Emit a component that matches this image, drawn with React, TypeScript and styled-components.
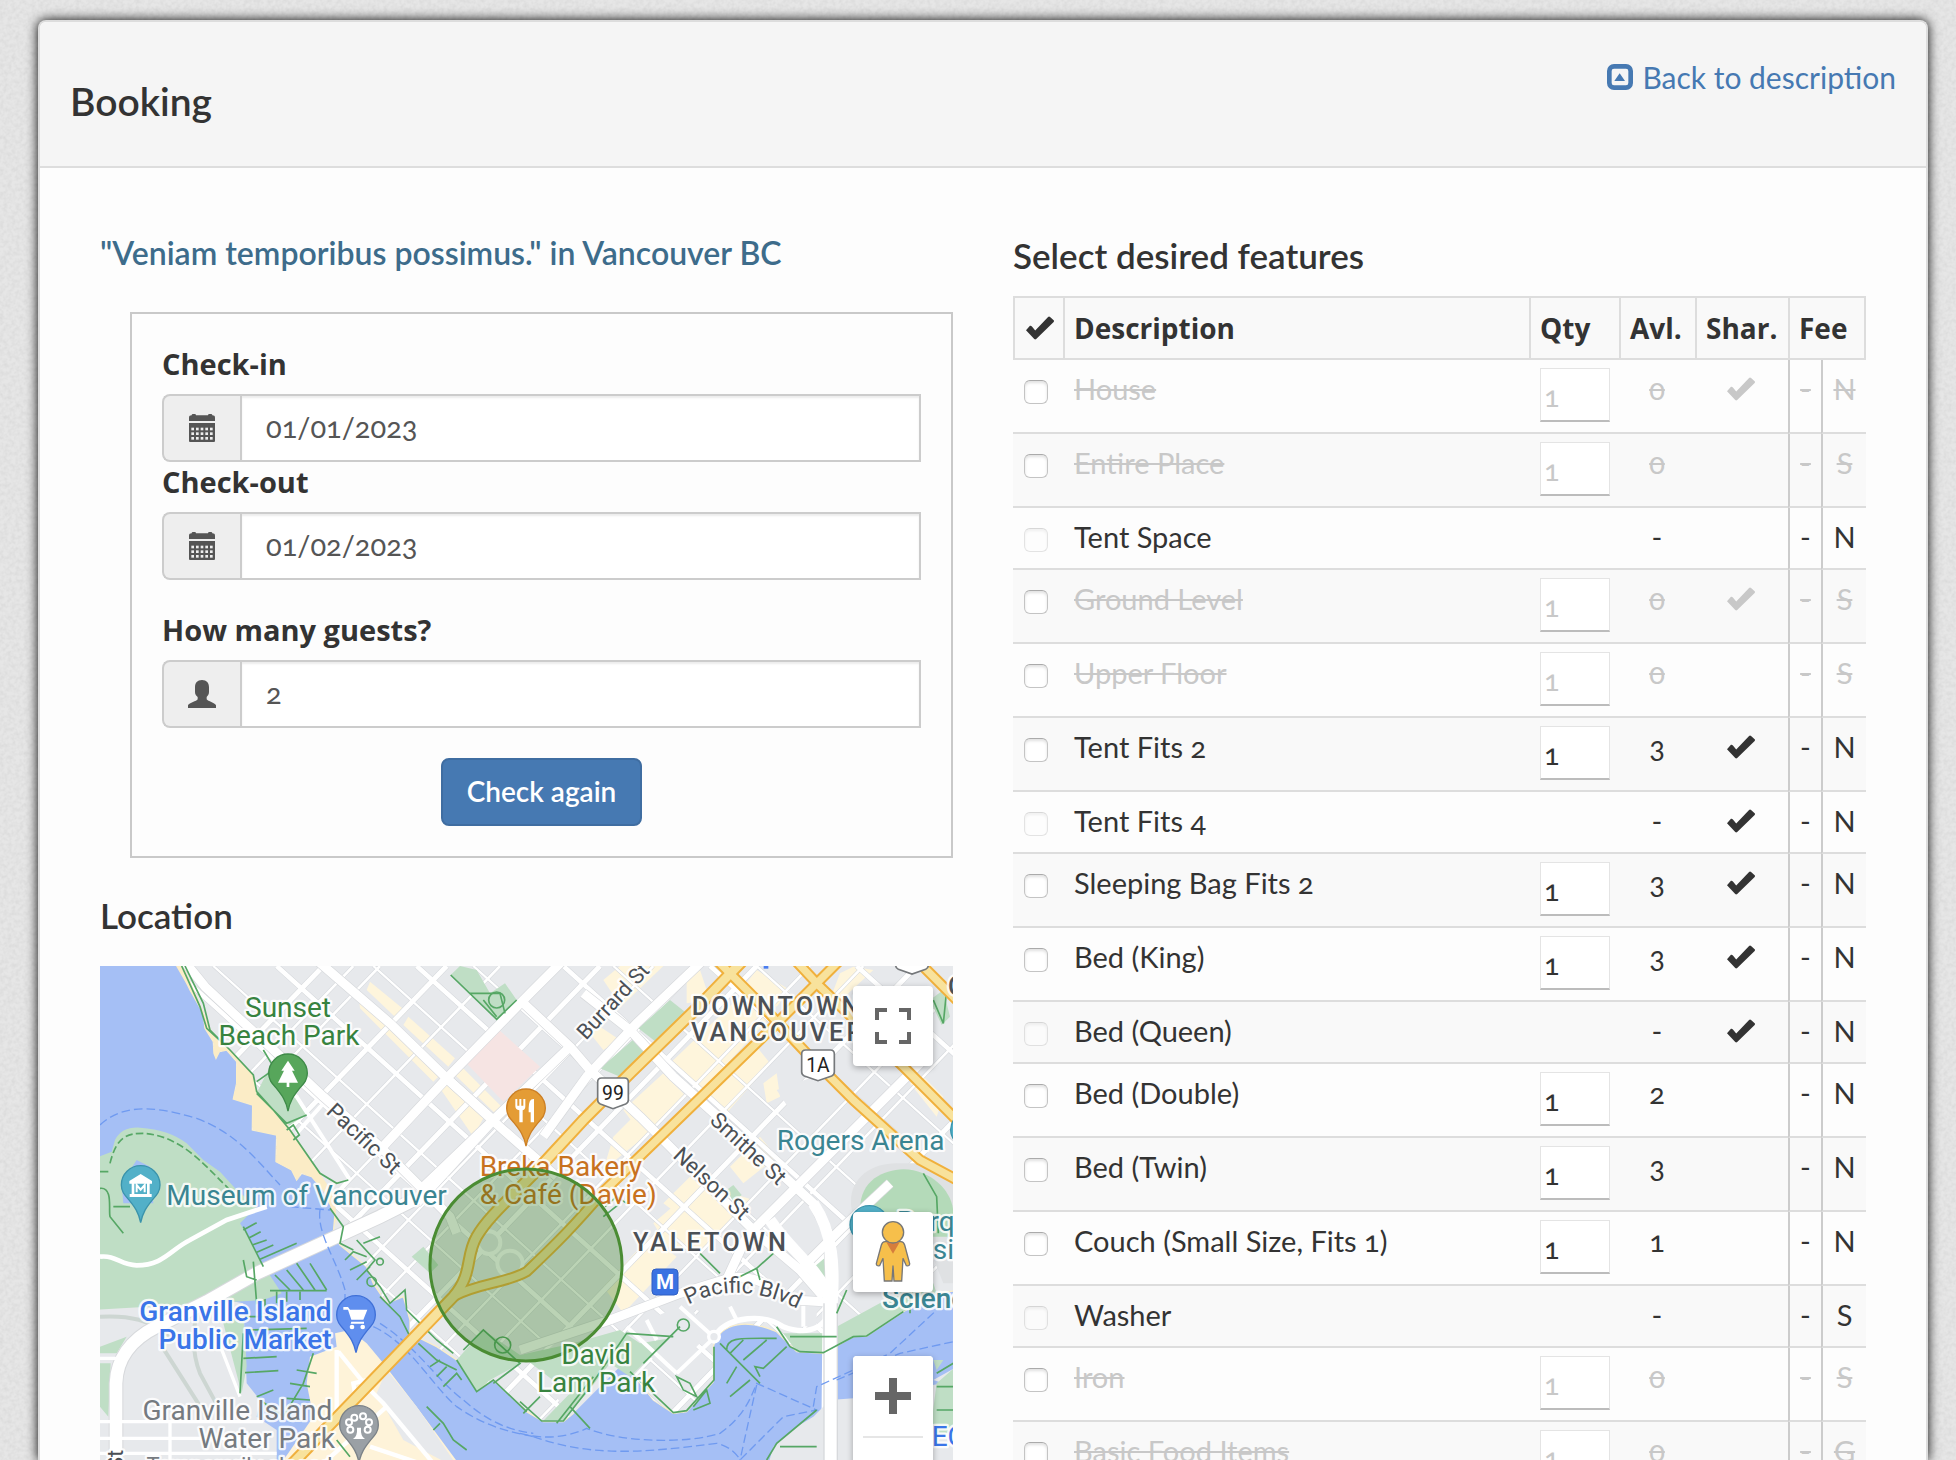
import React, { useId, useState } from "react";
import styled, { createGlobalStyle, css } from "styled-components";

const bodyFont = `Lato, "Open Sans", sans-serif`;
const boldFont = `"Open Sans", Lato, sans-serif`;

const GlobalStyle = createGlobalStyle`
  *, *::before, *::after { box-sizing: border-box; }
  body {
    margin: 0;
    overflow: hidden;
    background: #e6e6e6;
    color: #333;
    font: 29px/40px ${bodyFont};
    font-variant-numeric: oldstyle-nums;
  }
`;

/* ---------- page frame ---------- */

const Page = styled.div`
  height: 100vh;
  overflow: hidden;
  padding: 20px 28px 0 38px;
  position: relative;
`;

const Grain = styled.svg`
  position: absolute;
  inset: 0;
  width: 100%;
  height: 100%;
`;

const Panel = styled.main`
  position: relative;
  display: flex;
  flex-direction: column;
  height: 100%;
  border: 2px solid #ddd;
  border-bottom: 0;
  border-radius: 8px 8px 0 0;
  background: #fdfdfd;
  box-shadow: 0 0 12px #000;
`;

const PanelHeader = styled.header`
  display: flex;
  align-items: flex-start;
  justify-content: space-between;
  flex: none;
  height: 146px;
  padding: 35px 30px;
  border-bottom: 2px solid #ddd;
  border-radius: 6px 6px 0 0;
  background: #f5f5f5;
`;

const PageTitle = styled.h1`
  margin: 22px 0 0;
  font: 600 39px/44px ${bodyFont};
`;

const BackLink = styled.a`
  display: flex;
  align-items: center;
  gap: 9px;
  color: #4679b2;
  font-size: 30px;
  text-decoration: none;
`;

const Columns = styled.div`
  display: grid;
  grid-template-columns: 1fr 1fr;
  gap: 60px;
  flex: 1;
  min-height: 0;
  padding: 60px 60px 0;
`;

const Column = styled.section`
  display: flex;
  flex-direction: column;
  min-width: 0;
  min-height: 0;
`;

const Heading = styled.h2<{ $top: number; $bottom: number; $accent?: boolean }>`
  flex: none;
  margin: ${(p) => p.$top}px 0 ${(p) => p.$bottom}px;
  color: ${(p) => (p.$accent ? "#3d6c8b" : "#333")};
  font: 600 ${(p) => (p.$accent ? 32 : 35)}px/40px ${bodyFont};
`;

/* ---------- booking form ---------- */

const Form = styled.form`
  flex: none;
  margin-left: 30px;
  padding: 30px;
  border: 2px solid #c9c9c9;
`;

const Field = styled.div<{ $spaced?: boolean }>`
  margin-bottom: ${(p) => (p.$spaced ? 30 : 0)}px;
`;

const Label = styled.label`
  display: block;
  margin-bottom: 10px;
  font: 700 29px/40px ${boldFont};
`;

const InputGroup = styled.div`
  display: flex;
  height: 68px;
`;

const Addon = styled.span`
  display: flex;
  align-items: center;
  justify-content: center;
  width: 78px;
  border: 2px solid #ccc;
  border-right: 0;
  border-radius: 8px 0 0 8px;
  background: #eee;
`;

const TextInput = styled.input`
  flex: 1;
  min-width: 0;
  padding: 0 24px 2px;
  border: 2px solid #ccc;
  border-radius: 0;
  background: #fff;
  box-shadow: inset 0 2px 2px rgba(0, 0, 0, 0.075);
  color: #555;
  font: inherit;
  font-variant-numeric: inherit;
`;

const SubmitButton = styled.button`
  display: block;
  height: 68px;
  margin: 0 auto;
  padding: 0 24px 2px;
  border: 2px solid #3f6da1;
  border-radius: 8px;
  background: #4679b2;
  color: #fff;
  font: 600 28px/40px ${bodyFont};
`;

/* ---------- features table ---------- */

const Table = styled.table`
  flex: none;
  width: 100%;
  table-layout: fixed;
  border-collapse: separate;
  border-spacing: 0;
`;

const Col = styled.col<{ $w?: number }>`
  width: ${(p) => (p.$w ? `${p.$w}px` : "auto")};
`;

const HeadCell = styled.th`
  height: 64px;
  padding: 0 9px;
  border: 2px solid #ddd;
  border-right-width: 0;
  background: #f9f9f9;
  font-family: ${boldFont};
  font-size: 28px;
  text-align: left;
  white-space: nowrap;
  &:first-child { padding-left: 11px; }
  &:last-child { border-right-width: 2px; }
  svg { display: block; }
`;

const Cell = styled.td<{ $kind?: "center" | "fee" | "box" | "qty" }>`
  padding: 9px 11px 11px;
  border-bottom: 2px solid #ddd;
  vertical-align: top;
  white-space: nowrap;
  ${(p) => p.$kind === "center" && css`text-align: center;`}
  ${(p) => p.$kind === "fee" && css`
    padding: 9px 0 11px;
    border-left: 2px solid #ccc;
    text-align: center;
  `}
  ${(p) => p.$kind === "box" && css`padding: 20px 11px 0;`}
  ${(p) => p.$kind === "qty" && css`padding: 8px 11px 0;`}
  svg { display: inline-block; vertical-align: -1px; }
`;

const Row = styled.tr<{ $off?: boolean; $striped?: boolean }>`
  background: ${(p) => (p.$striped ? "#f9f9f9" : "transparent")};
  color: ${(p) => (p.$off ? "#c8c8c8" : "#333")};
  ${Cell} { text-decoration: ${(p) => (p.$off ? "line-through" : "none")}; }
  ${Cell}:nth-child(3) { text-decoration: none; }
`;

const CheckBox = styled.input`
  appearance: none;
  display: block;
  width: 24px;
  height: 24px;
  margin: 0;
  border: 1px solid #c4c4c4;
  border-top-color: #aaa;
  border-radius: 6px;
  background: #fff;
  box-shadow: inset 0 2px 3px rgba(0, 0, 0, 0.12);
  &:disabled { opacity: 0.45; }
  &:checked { background: #4679b2; }
`;

const QtyInput = styled.input<{ $off?: boolean }>`
  display: block;
  width: 70px;
  height: 54px;
  margin: 0 0 10px;
  padding: 2px 3px 0;
  border: 1px solid #e4e4e4;
  border-bottom: 2px solid #bcbcbc;
  border-radius: 0;
  background: #fff;
  color: ${(p) => (p.$off ? "#c8c8c8" : "#333")};
  font: inherit;
  font-variant-numeric: inherit;
`;

/* ---------- icons ---------- */

const CheckIcon = () => (
  <svg width="28" height="24" viewBox="0 0 85 71" fill="currentColor" aria-hidden="true">
    <path d="M0 42 12 29Q15 28 18 31L28 43 67 2Q70 -1 73 2L84 12Q86 14 84 17L31 69Q28 72 25 69Z" />
  </svg>
);

const CalendarIcon = () => (
  <svg width="26" height="28" viewBox="0 0 78 84" aria-hidden="true">
    <path fill="#555" d="M8 4Q8 0 12 0H17Q21 0 21 4H57Q57 0 61 0H66Q70 0 70 4 78 4 78 11V21H0V11Q0 4 8 4ZM0 27H78V81Q78 84 75 84H3Q0 84 0 81Z" />
    {[41, 55, 69].map((y) =>
      [7, 21, 35, 49, 63].map((x) => <rect key={`${x}-${y}`} x={x} y={y} width="8" height="8" fill="#eee" />)
    )}
  </svg>
);

const UserIcon = () => (
  <svg width="28" height="28" viewBox="0 0 84 84" aria-hidden="true">
    <path fill="#555" d="M42 0C56 0 63 9 63 22V36C63 44 59 47 56 51V58C60 64 80 68 84 76V84H0V76C4 68 26 64 29 58V51C25 47 21 44 21 36V22C21 9 28 0 42 0Z" />
  </svg>
);

const CollapseIcon = () => (
  <svg width="26" height="26" viewBox="0 0 78 78" aria-hidden="true">
    <rect x="7" y="7" width="64" height="64" rx="14" fill="none" stroke="#4679b2" strokeWidth="14" />
    <path d="M22 51 38 28 54 51Z" fill="#4679b2" />
  </svg>
);

/* ---------- map ---------- */

const MapFrame = styled.div`
  position: relative;
  flex: 1;
  min-height: 0;
  overflow: hidden;
`;

const MapCanvas = styled.svg`
  position: absolute;
  inset: 0;
  width: 100%;
  height: 100%;
  font-family: Roboto, sans-serif;
  font-variant-numeric: lining-nums;
`;

const MapControls = styled.div`
  position: absolute;
  top: 20px;
  right: 20px;
  display: flex;
  flex-direction: column;
  width: 80px;
`;

const MapButton = styled.button<{ $gap?: number }>`
  display: flex;
  align-items: center;
  justify-content: center;
  width: 80px;
  height: 80px;
  margin: 0 0 ${(p) => p.$gap ?? 0}px;
  padding: 0;
  border: 0;
  border-radius: 4px;
  background: #fff;
  box-shadow: 0 2px 6px rgba(0, 0, 0, 0.3);
`;

const ZoomGroup = styled.div`
  display: flex;
  flex-direction: column;
  align-items: center;
  border-radius: 4px;
  background: #fff;
  box-shadow: 0 2px 6px rgba(0, 0, 0, 0.3);
  button { box-shadow: none; }
`;

const Divider = styled.span`
  width: 60px;
  height: 2px;
  background: #e6e6e6;
`;

const Halo = styled.text<{ $size?: number; $color?: string; $weight?: number; $track?: number }>`
  font-size: ${(p) => p.$size ?? 84}px;
  font-weight: ${(p) => p.$weight ?? 400};
  letter-spacing: ${(p) => p.$track ?? 0}px;
  fill: ${(p) => p.$color ?? "#4b5055"};
  stroke: #fff;
  stroke-opacity: 0.85;
  stroke-width: 14px;
  stroke-linejoin: round;
  paint-order: stroke;
`;

const green = "#37833f";
const teal = "#3a8592";
const blue = "#3a75e8";
const slate = "#757a80";

const Pin = ({ x, y, fill, edge, children }: { x: number; y: number; fill: string; edge: string; children?: React.ReactNode }) => (
  <g transform={`translate(${x} ${y})`}>
    <path d="M0 113C-6 82-18 66-34 46-48 30-58 20-58 0A58 58 0 1 1 58 0C58 20 48 30 34 46 18 66 6 82 0 113Z" fill={fill} stroke={edge} strokeWidth="4" />
    {children}
  </g>
);

const Shield = ({ x, y, w, label }: { x: number; y: number; w: number; label: string }) => (
  <g transform={`translate(${x} ${y})`}>
    <path d={`M12 0H${w - 12}Q${w} 0 ${w} 12V66Q${w} 74 ${w - 8} 78L${w / 2} 92 8 78Q0 74 0 66V12Q0 0 12 0Z`} fill="#fff" stroke="#75787b" strokeWidth="5" />
    <text x={w / 2} y="66" textAnchor="middle" fontSize="58" fill="#222">{label}</text>
  </g>
);

/* Straight streets of the downtown grid: those climbing to the north-east and those falling to the south-east. */
const climbing = [-700, -610, -530, -330, -170, 0, 130, 290, 430, 600, 760, 920, 1080, 1260, 1420, 1640, 1790, 2010, 2200, 2380];
const falling = [-720, -600, -470, -190, -60, 110, 240, 370, 560, 850, 980, 1150, 1420, 1570, 1860, 2000, 2300];

const highways = [
  "M560 1590 1090 1040C1150 970 1125 920 1160 860 1200 790 1290 720 1360 640L1480 510 1620 370 1820 175 1960 30",
  "M1090 1040C1160 1000 1250 1000 1310 965 1400 880 1450 830 1540 725L1690 580 1850 425 2050 230 2250 30",
  "M1880 30 1990 140 2150 310 2290 450 2490 630 2620 700",
  "M2115 30 2190 110 2440 350 2620 530",
  "M2480 30 2620 170",
];

const whiteMajor = [
  "M280 30 345 110 430 190 540 290 700 440 870 590 990 710 1080 800 1100 850",
  "M680 30 900 220 1070 385 1240 540 1400 680",
  "M980 760 1210 510 1070 385M990 720 1440 290",
  "M860 610 1070 385 1320 130 1420 30",
  "M1360 560 1490 380 1640 220 1840 30",
  "M1290 150 1440 290 1500 360 1650 500 1790 640 1930 780 2000 850 2130 960 2200 1040",
  "M1480 130 1620 240 1750 380 1850 470 2050 650 2170 760 2215 850 2220 1000",
  "M1290 1200 1560 1110 1770 1030 1900 990C1990 960 2050 1020 2110 1050L2200 1055",
  "M1900 1010 1970 860 2110 720 2260 570 2500 330",
  "M2130 960 2250 840 2400 700",
];

const FloatingMap = () => {
  const uid = useId().replace(/:/g, "");
  const land = `land${uid}`;
  const arc = `arc${uid}`;
  const downtown =
    "M258 30 300 120 340 190 345 235 370 275 372 310 378 325 388 305 410 300 440 335 440 400 430 447 488 465 487 540 560 555 558 635 605 660 620 690 635 670 665 680 700 720 735 790 730 850 750 885 830 950 850 1000 890 1060 940 1040 960 1110 960 1150 1040 1190 1100 1230 1160 1320 1210 1290 1310 1385 1360 1415 1420 1415 1450 1390 1500 1300 1550 1240 1620 1260 1690 1350 1750 1390 1790 1385 1870 1295 1870 1190C1890 1110 1980 1110 2060 1145L2120 1205 2200 1210 2290 1160 2330 1158 2440 1085 2530 1030 2620 1020V30Z";
  return (
    <MapCanvas viewBox="30 48 2559 1482" preserveAspectRatio="xMinYMin slice" role="img" aria-label="Map of Yaletown, Vancouver">
      <defs>
        <clipPath id={land}><path d={downtown} /></clipPath>
        <path id={arc} d="M1795 1064Q1945 985 2130 1080" />
      </defs>
      <rect x="0" y="0" width="2700" height="1700" fill="#a5bff5" />

      {/* peninsula */}
      <path d={downtown} fill="#e7e9ec" stroke="#faeec8" strokeWidth="4" />

      {/* commercial blocks */}
      <g fill="#fef5dc">
        <path d="M840 95 950 185 925 210 830 120ZM805 130 1050 375 1030 395 810 175ZM955 200 1095 325 1075 350 940 225ZM1115 350 1235 470 1215 490 1095 375ZM1070 395 1180 505 1150 560 1050 415Z" />
        <path d="M1540 90 1590 48 1720 48 1530 230 1590 270 1540 300 1500 250 1580 150ZM1790 80 1830 60 1860 150 1790 160ZM2000 60 2100 120 2060 170 1960 110ZM2250 70 2290 50 2350 60 2200 200Z" />
        <path d="M1740 340 1960 130 2050 190 1830 430ZM1600 480 1720 370 1790 440 1660 560ZM1850 430 2000 290 2040 340 1900 500ZM1570 560 1650 480 1700 530 1540 660ZM1720 760 1800 680 1850 720 1760 790ZM2020 400 2060 370 2070 440 2030 460Z" />
        <path d="M1690 820 1830 700 1990 750 1840 900 1740 900ZM1540 1010 1680 860 1760 920 1600 1090ZM1920 650 2010 560 2060 620 1960 700ZM2460 400 2500 380 2560 440 2540 500Z" />
      </g>

      {/* street grid */}
      <g clipPath={`url(#${land})`} fill="none" stroke="#fff">
        <g stroke="#d3d6da" strokeWidth="11">
          {climbing.map((c, i) => <path key={i} strokeWidth={i % 3 ? 11 : 18} d={`M${c} 1500 L${c + 1400} 48`} />)}
          {falling.map((c, i) => <path key={i} strokeWidth={i % 2 ? 10 : 17} d={`M${c} 48 L${c + 1500} 1400`} />)}
        </g>
        <g>
          {climbing.map((c, i) => <path key={i} strokeWidth={i % 3 ? 8 : 15} d={`M${c} 1500 L${c + 1400} 48`} />)}
          {falling.map((c, i) => <path key={i} strokeWidth={i % 2 ? 7 : 14} d={`M${c} 48 L${c + 1500} 1400`} />)}
        </g>
      </g>

      {/* blocks that interrupt the grid */}
      <path d="M1125 335 1225 238 1350 350 1240 455Z" fill="#f6e4e3" />
      <path d="M1330 1240 1480 1100 1600 1240 1440 1400ZM1650 1120 1790 1060 1860 1150 1740 1270 1620 1170ZM1780 1060 1900 1010 2180 1070V1130C2060 1130 1980 1070 1900 1120ZM2060 420 2200 370 2260 430 2140 540Z" fill="#e7e9ec" />
      <path d="M2290 800C2260 700 2330 640 2420 640L2500 640 2600 700V1000H2560L2500 850 2300 850Z" fill="#dfe1e3" />
      <path d="M2310 780C2310 690 2380 660 2440 658 2530 660 2590 730 2590 790V860H2310Z" fill="#b4dab9" />

      {/* green spaces and beach */}
      <g fill="#bfdec5">
        <path d="M1082 75 1110 48 1160 60 1200 130 1245 100 1280 150 1220 208Z" />
        <path d="M1530 355 1640 260 1690 310 1590 380ZM1645 235 1740 150 1790 190 1710 285Z" />
        <path d="M500 430 540 350 655 490 600 525 570 510Z" />
        <path d="M965 920 1000 890 1045 945 1020 970Z" />
        <path d="M1100 1230 1180 1140 1290 1215 1450 1180 1590 1140 1650 1180 1740 1165 1620 1280 1560 1240 1490 1330 1420 1410 1360 1412 1440 1330 1310 1230 1200 1290 1160 1325Z" />
        <path d="M2155 965 2215 915 2222 1020ZM2080 1150 2240 1150 2240 1130 2460 1010 2530 1000 2540 1030 2440 1085 2330 1158 2290 1160 2200 1210 2120 1205ZM2520 150 2560 120 2580 200 2555 225Z" />
        <path d="M1910 720 1930 705 1955 735 1930 755Z" />
      </g>
      <path d="M258 48 300 120 340 190 345 235 370 275 372 310 378 325 388 305 410 300 440 335 440 400 430 447 488 465 487 540 560 555 558 635 605 660 620 690 635 670 665 680 700 720 730 790 740 830 735 740 690 670 590 520 500 430 490 375 420 300 365 245 330 160 280 48Z" fill="#fbecc6" />

      {/* main streets */}
      <g clipPath={`url(#${land})`} fill="none" stroke="#fff">
        <path d="M560 400 620 440 780 690M700 460 620 550M750 720 780 685M1870 1160 1770 1070M1870 1165 1760 1270M1610 1130 1760 1270M1670 1110 1700 1170M2140 1060V1130M1920 1070 1940 1110" strokeWidth="12" />
        <circle cx="1197" cy="878" r="34" fill="#e7e9ec" strokeWidth="12" />
        <circle cx="1260" cy="940" r="38" fill="#e7e9ec" strokeWidth="12" />
        {whiteMajor.map((d, i) => <path key={i} d={d} stroke="#d7d9dc" strokeWidth="31" strokeLinejoin="round" />)}
        {whiteMajor.map((d, i) => <path key={i} d={d} strokeWidth="27" strokeLinejoin="round" />)}
        <path d="M1880 1150C1920 1100 2020 1090 2080 1130 2130 1150 2200 1150 2220 1080" strokeWidth="16" />
      </g>
      <circle cx="1872" cy="1160" r="16" fill="#e7e9ec" stroke="#fff" strokeWidth="10" />
      <path d="M2040 810C2100 900 2190 960 2215 1040L2210 1560M2170 760C2230 850 2235 950 2225 1080" fill="none" stroke="#fff" strokeWidth="34" />

      {/* Kitsilano and Vanier Park */}
      <path d="M0 1050 300 1030 460 1060 470 1300 510 1350 500 1400 560 1440 560 1560H0Z" fill="#e7e9ec" />
      <path d="M0 630 65 605 75 570Q95 530 150 533 240 540 290 580L340 630 390 665 440 720 500 770 450 820 490 885 510 930 575 1030 520 1050 0 1080Z" fill="#bfdec5" />
      <path d="M95 700 140 630 180 650 190 760 100 760Z" fill="#a5bff5" />
      <path d="M400 1120 460 1090 470 1250 455 1330ZM30 1240H62L55 1400 30 1370ZM30 1190 110 1160 80 1210H30Z" fill="#bfdec5" />
      <path d="M330 1050C300 1150 310 1220 330 1270L400 1400M210 1180 350 1400M30 1100C120 1095 180 1110 240 1160" fill="none" stroke="#cdd6d2" strokeWidth="12" />
      <g fill="none" stroke="#fff">
        <path d="M30 920C80 915 90 945 140 946 220 946 240 900 300 870L410 810 530 770" strokeWidth="14" />
        <path d="M980 745 870 800 500 970 350 1055 200 1130C120 1170 80 1230 78 1300V1560" stroke="#d7d9dc" strokeWidth="44" />
        <path d="M980 745 870 800 500 970 350 1055 200 1130C120 1170 80 1230 78 1300V1560" strokeWidth="38" />
        <path d="M30 1415H520M30 1465H480M30 1510H560M240 1415V1540M30 1225H80M380 1160 450 1340" strokeWidth="10" />
      </g>

      {/* Granville Island */}
      <path d="M735 1150 780 1140 830 1180 880 1240 980 1370 1120 1560H560L670 1400 650 1300 660 1220 740 1190Z" fill="#fef3d9" />
      <path d="M890 1260 980 1370 1110 1560 940 1470 860 1330Z" fill="#e7e9ec" />
      <path d="M740 1200V1400M745 1205 830 1310 880 1360 1030 1540M800 1360 790 1300 830 1290M700 1540 890 1370M840 1490 990 1540" fill="none" stroke="#fff" strokeWidth="13" />

      {/* south shore */}
      <path d="M2030 1560 2050 1490 2120 1430 2170 1400 2220 1350 2290 1345 2560 1300 2530 1290 2620 1240V1560Z" fill="#e7e9ec" />
      <path d="M2540 1300 2620 1230V1450H2520ZM2530 1230H2560L2540 1260Z" fill="#bfdec5" />
      <path d="M2222 1060V1560" stroke="#d7d9dc" strokeWidth="44" />
      <path d="M2222 1040V1560" stroke="#fff" strokeWidth="36" />

      {/* ferry lines */}
      <g fill="none" stroke="#6f9af0" strokeWidth="4" strokeDasharray="26 12">
        <path d="M30 525C90 470 170 460 320 505 440 550 500 630 570 705M600 770 720 780" />
        <path d="M690 780C680 850 740 930 765 1020V1070M850 1130C960 1180 1020 1300 1100 1370 1200 1440 1290 1450 1330 1460M870 1120C980 1190 1040 1290 1120 1350 1200 1420 1260 1440 1330 1450" />
        <path d="M1290 1450C1400 1480 1480 1440 1490 1435 1600 1480 1800 1480 1890 1450 1960 1400 1980 1350 2000 1300L2180 1380 2080 1400 1950 1530" />
        <path d="M1330 1460C1500 1520 1650 1510 1880 1480 1930 1490 1950 1530 1960 1540M2000 1305 1950 1530M2170 1370 2180 1310 2400 1210 2540 1080M2240 1290 2430 1210 2590 1175" />
      </g>

      {/* footpaths and docks */}
      <g fill="none" stroke="#56a765" strokeWidth="5">
        <path d="M285 48 340 160 360 240 420 300 490 375 500 425 550 480 600 540 690 670 740 700 775 690M275 48 330 170 350 235 410 290M500 430 590 520 650 495M590 540 610 525 628 555 610 570M520 300 550 350M500 395 535 370" />
        <path d="M1082 75 1220 208 1280 150M1140 130 1230 130 1245 190M1180 150 1220 200" />
        <path d="M60 640C80 560 110 550 160 550 240 555 300 600 360 660L440 740" strokeDasharray="22 10" />
        <path d="M30 665H55M30 715C70 710 55 780 60 800L100 850M70 770 120 770" />
        <path d="M460 830 520 950M460 840 500 818M475 865 512 845M487 885 530 870M497 908 550 885M510 928 620 880M555 975 600 1020M590 960 640 1020M620 940 675 1020M660 940 710 1020M540 1022H710M490 935 500 1060 525 1050 525 1080M560 1025V1060M590 1025V1055M630 1025V1050M460 930 470 980 500 990" />
        <path d="M465 1100H620M470 1140 650 1135M460 1225 560 1220M465 1268 565 1262M450 1330 460 1150M500 1340 550 1320M510 1350 580 1400 640 1300 670 1210M620 1260 680 1270M600 1300 660 1310M590 1345 660 1350" />
        <path d="M720 775 760 830 750 880 790 900M800 870 855 930 830 960 870 1010 900 1060 945 1020 950 1080 1000 1130 1040 1170 1090 1210M765 930 790 905 830 920M780 960 830 935M800 990 840 950M870 1040 910 1080 930 1100 960 1160M820 880 870 860" />
        <path d="M985 1180 1040 1230 1100 1260M1020 1250 1050 1230M1040 1280 1070 1250M1060 1310 1100 1270 1115 1290M1100 1230 1160 1325 1210 1290 1310 1385M1120 1200 1180 1140 1290 1240 1210 1300" />
        <path d="M1290 1355 1355 1413H1420L1500 1310 1610 1150 1750 1160M1440 1370 1500 1435M1400 1420 1510 1280M1620 1265 1750 1388 1790 1382 1872 1290V1190M1660 1240 1770 1130M1760 1280 1800 1300 1820 1340 1780 1320ZM1810 1370 1850 1320 1860 1360 1810 1380" />
        <path d="M1890 1180 2010 1300M1910 1200C1910 1160 1950 1165 2060 1165M1960 1170 1920 1210M2030 1170 1960 1230M2090 1190 2020 1255 1995 1250 2010 1280M1940 1250 1910 1300M1980 1290 1920 1340M2060 1130 2100 1190 2130 1205 2200 1208 2290 1160 2330 1158 2440 1085" />
        <path d="M2030 1530 2060 1480 2180 1380M2070 1490H2180M2100 1160H2240M2270 1020 2240 1090M2460 1010V1090M1940 985 2000 955 2050 910M1830 910 1890 970M2000 955 2010 990M2540 1270 2590 1240M2540 1310H2590M2540 1380H2590M2500 670 2540 740 2545 850M2530 150 2560 220 2570 120M1300 1390 1350 1340" />
        <path d="M1010 1370 1060 1420 1090 1470 1130 1500M1050 1420 1030 1440M740 1470 780 1520M1545 770 1580 740 1610 760M1540 800 1590 760" />
        <circle cx="1780" cy="1125" r="18" /><circle cx="1238" cy="1185" r="24" /><circle cx="870" cy="935" r="10" /><circle cx="845" cy="995" r="14" /><circle cx="1220" cy="150" r="24" />
      </g>

      {/* highways */}
      <g fill="none" strokeLinejoin="round">
        {highways.map((d, i) => <path key={i} d={d} stroke="#f0b03c" strokeWidth={i ? 34 : 38} />)}
        {highways.map((d, i) => <path key={i} d={d} stroke="#f8e29c" strokeWidth={i ? 22 : 26} />)}
      </g>

      {/* place labels */}
      <Halo x="594" y="200" textAnchor="middle" $color={green}>Sunset</Halo>
      <Halo x="597" y="285" textAnchor="middle" $color={green}>Beach Park</Halo>
      <Halo x="229" y="765" $color={teal}>Museum of Vancouver</Halo>
      <Halo transform="translate(706 488) rotate(43)" $size={66}>Pacific St</Halo>
      <Halo transform="translate(1488 272) rotate(-47)" $size={64}>Burrard St</Halo>
      <Halo transform="translate(1856 515) rotate(43)" $size={66}>Smithe St</Halo>
      <Halo transform="translate(1746 620) rotate(43)" $size={66}>Nelson St</Halo>
      <Halo x="1805" y="195" $size={76} $weight={500} $track={9}>DOWNTOWN</Halo>
      <Halo x="1803" y="272" $size={76} $weight={500} $track={9}>VANCOUVER</Halo>
      <Halo x="2574" y="136" $size={76} $weight={500}>C</Halo>
      <Halo x="2060" y="599" $color={teal}>Rogers Arena</Halo>
      <Halo x="1169" y="678" $color="#c8721f">Breka Bakery</Halo>
      <Halo x="1169" y="762" $color="#c8721f">&amp; Café (Davie)</Halo>
      <Halo x="1629" y="902" $size={76} $weight={500} $track={9}>YALETOWN</Halo>
      <Halo $size={66}><textPath href={`#${arc}`}>Pacific Blvd</textPath></Halo>
      <Halo x="725" y="1112" textAnchor="end" $weight={500} $color={blue}>Granville Island</Halo>
      <Halo x="725" y="1196" textAnchor="end" $weight={500} $color={blue}>Public Market</Halo>
      <Halo x="727" y="1410" textAnchor="end" $color={slate}>Granville Island</Halo>
      <Halo x="735" y="1493" textAnchor="end" $color={slate}>Water Park</Halo>
      <Halo x="727" y="1568" textAnchor="end" $size={66} $color={slate}>Temporarily closed</Halo>
      <Halo x="2420" y="844" $color={teal}>Parq</Halo>
      <Halo x="2428" y="928" $color={teal}>Casino</Halo>
      <Halo x="2376" y="1075" $weight={500} $color={teal}>Science World</Halo>
      <Halo x="2525" y="1488" $color={blue}>EC</Halo>
      <Halo transform="translate(100 1560) rotate(-90)" $size={66}>St</Halo>

      {/* markers */}
      <Shield x={1523} y={384} w={92} label="99" />
      <Shield x={2135} y={300} w={98} label="1A" />
      <Shield x={2417} y={-20} w={98} label="1" />
      <rect x="1686" y="957" width="78" height="78" rx="12" fill="#3a72e2" stroke="#2f5fc4" strokeWidth="3" />
      <text x="1725" y="1018" textAnchor="middle" fontSize="62" fontWeight="700" fill="#fff">M</text>
      <rect x="2021" y="48" width="14" height="8" fill="#4a7df0" />
      <Pin x={594} y={370} fill="#57a65b" edge="#3e8a48">
        <path d="M0-38 20-8H12L30 28H4V41H-4V28H-30L-12-8H-20Z" fill="#fff" />
      </Pin>
      <Pin x={152} y={705} fill="#52b0c8" edge="#3a93ab">
        <path d="M0-33 34-12V-4H27V27H33V36H-33V27H-27V-4H-34V-12ZM-19-4V27H19V-4Z" fill="#fff" fillRule="evenodd" />
        <path d="M-12 22V0L0 14 12 0V22" fill="none" stroke="#fff" strokeWidth="6" />
      </Pin>
      <Pin x={1308} y={475} fill="#e49c35" edge="#cc7f24">
        <path d="M-32-28H-26V-8H-20V-28H-14V-8H-8V-28H-2V-6Q-2 4-10 6V42H-20V6Q-32 4-32-6ZM22-28Q8-28 8 0V12H14V42H24V-28Z" fill="#fff" />
      </Pin>
      <Pin x={798} y={1095} fill="#5f8eee" edge="#3f70d8">
        <path d="M-38-24H-24L-18-16H34L22 14H-14L-24-16H-38ZM-14 20H24V26H-16Z" fill="#fff" />
        <circle cx="-12" cy="36" r="7" fill="#fff" /><circle cx="20" cy="36" r="7" fill="#fff" />
      </Pin>
      <Pin x={807} y={1425} fill="#9aa0a5" edge="#7b8288">
        <path d="M-18 42Q-4 34-6 8H6Q4 34 18 42Z" fill="#fff" />
        <g fill="none" stroke="#fff" strokeWidth="6">
          <circle cx="-26" cy="14" r="9" /><circle cx="26" cy="14" r="9" /><circle cx="-30" cy="-8" r="9" /><circle cx="30" cy="-8" r="9" />
          <circle cx="-14" cy="-22" r="9" /><circle cx="12" cy="-26" r="9" />
        </g>
      </Pin>
      <Pin x={2640} y={540} fill="#52b0c8" edge="#3a93ab" />
      <Pin x={2338} y={825} fill="#52b0c8" edge="#3a93ab" />

      <circle cx="1308" cy="945" r="288" fill="#317a1f" fillOpacity="0.33" stroke="#4a8c33" strokeWidth="9" />
      <Halo x="1518" y="1243" textAnchor="middle" $color={green}>David</Halo>
      <Halo x="1518" y="1327" textAnchor="middle" $color={green}>Lam Park</Halo>
    </MapCanvas>
  );
};

/* ---------- data ---------- */

type Feature = { name: string; avl: string; shared?: boolean; fee: string; off?: boolean };

const features: Feature[] = [
  { name: "House", avl: "0", shared: true, fee: "N", off: true },
  { name: "Entire Place", avl: "0", fee: "S", off: true },
  { name: "Tent Space", avl: "-", fee: "N" },
  { name: "Ground Level", avl: "0", shared: true, fee: "S", off: true },
  { name: "Upper Floor", avl: "0", fee: "S", off: true },
  { name: "Tent Fits 2", avl: "3", shared: true, fee: "N" },
  { name: "Tent Fits 4", avl: "-", shared: true, fee: "N" },
  { name: "Sleeping Bag Fits 2", avl: "3", shared: true, fee: "N" },
  { name: "Bed (King)", avl: "3", shared: true, fee: "N" },
  { name: "Bed (Queen)", avl: "-", shared: true, fee: "N" },
  { name: "Bed (Double)", avl: "2", fee: "N" },
  { name: "Bed (Twin)", avl: "3", fee: "N" },
  { name: "Couch (Small Size, Fits 1)", avl: "1", fee: "N" },
  { name: "Washer", avl: "-", fee: "S" },
  { name: "Iron", avl: "0", fee: "S", off: true },
  { name: "Basic Food Items", avl: "0", fee: "G", off: true },
];

const FeatureRow = ({ feature, striped }: { feature: Feature; striped: boolean }) => {
  const id = useId();
  const bookable = feature.avl !== "-";
  return (
    <Row $off={feature.off} $striped={striped}>
      <Cell $kind="box"><CheckBox id={id} type="checkbox" disabled={!bookable} /></Cell>
      <Cell><label htmlFor={id}>{feature.name}</label></Cell>
      <Cell $kind="qty">
        {bookable && <QtyInput type="text" inputMode="numeric" defaultValue="1" $off={feature.off} aria-label={`Quantity of ${feature.name}`} />}
      </Cell>
      <Cell $kind="center">{feature.avl}</Cell>
      <Cell $kind="center">{feature.shared && <CheckIcon />}</Cell>
      <Cell $kind="fee">-</Cell>
      <Cell $kind="fee">{feature.fee}</Cell>
    </Row>
  );
};

export default function App() {
  const [checkIn, setCheckIn] = useState("01/01/2023");
  const [checkOut, setCheckOut] = useState("01/02/2023");
  const [guests, setGuests] = useState("2");
  return (
    <>
      <GlobalStyle />
      <Page>
        <Grain aria-hidden="true">
          <filter id="paper">
            <feTurbulence type="fractalNoise" baseFrequency="0.25" numOctaves="3" />
            <feColorMatrix values="0 0 0 0 0.5  0 0 0 0 0.5  0 0 0 0 0.5  0.5 0 0 0 -0.17" />
          </filter>
          <rect width="100%" height="100%" filter="url(#paper)" />
        </Grain>
        <Panel>
          <PanelHeader>
            <PageTitle>Booking</PageTitle>
            <BackLink href="#description"><CollapseIcon />Back to description</BackLink>
          </PanelHeader>
          <Columns>
            <Column>
              <Heading $top={5} $bottom={39} $accent>"Veniam temporibus possimus." in Vancouver BC</Heading>
              <Form onSubmit={(e) => e.preventDefault()}>
                <Field>
                  <Label htmlFor="check-in">Check-in</Label>
                  <InputGroup>
                    <Addon><CalendarIcon /></Addon>
                    <TextInput id="check-in" value={checkIn} onChange={(e) => setCheckIn(e.target.value)} />
                  </InputGroup>
                </Field>
                <Field $spaced>
                  <Label htmlFor="check-out">Check-out</Label>
                  <InputGroup>
                    <Addon><CalendarIcon /></Addon>
                    <TextInput id="check-out" value={checkOut} onChange={(e) => setCheckOut(e.target.value)} />
                  </InputGroup>
                </Field>
                <Field $spaced>
                  <Label htmlFor="guests">How many guests?</Label>
                  <InputGroup>
                    <Addon><UserIcon /></Addon>
                    <TextInput id="guests" value={guests} onChange={(e) => setGuests(e.target.value)} />
                  </InputGroup>
                </Field>
                <SubmitButton type="submit">Check again</SubmitButton>
              </Form>
              <Heading $top={37} $bottom={31}>Location</Heading>
              <MapFrame>
                <FloatingMap />
                <MapControls>
                  <MapButton type="button" aria-label="Toggle fullscreen view" $gap={146}>
                    <svg width="36" height="36" viewBox="0 0 36 36" fill="none" stroke="#666" strokeWidth="4">
                      <path d="M2 12V2H12M24 2H34V12M34 24V34H24M12 34H2V24" />
                    </svg>
                  </MapButton>
                  <MapButton type="button" aria-label="Street View" $gap={64}>
                    <svg width="36" height="62" viewBox="0 0 108 186" stroke="#777" strokeWidth="4">
                      <path d="M30 62H78Q86 62 89 72L104 128Q104 136 94 134L84 112 80 180H57L54 134 51 180H28L24 112 14 134Q4 136 4 128L19 72Q22 62 30 62Z" fill="#f6bf4b" />
                      <path d="M34 64H74L54 98Z" fill="#d67d3c" stroke="none" />
                      <circle cx="54" cy="34" r="32" fill="#f6bf4b" />
                    </svg>
                  </MapButton>
                  <ZoomGroup>
                    <MapButton type="button" aria-label="Zoom in">
                      <svg width="36" height="36" viewBox="0 0 36 36" stroke="#666" strokeWidth="8"><path d="M18 0V36M0 18H36" /></svg>
                    </MapButton>
                    <Divider />
                    <MapButton type="button" aria-label="Zoom out">
                      <svg width="36" height="36" viewBox="0 0 36 36" stroke="#666" strokeWidth="8"><path d="M0 18H36" /></svg>
                    </MapButton>
                  </ZoomGroup>
                </MapControls>
              </MapFrame>
            </Column>
            <Column>
              <Heading $top={7} $bottom={21}>Select desired features</Heading>
              <Table>
                <colgroup>
                  <Col $w={50} /><Col /><Col $w={90} /><Col $w={76} /><Col $w={93} /><Col $w={33} /><Col $w={45} />
                </colgroup>
                <thead>
                  <tr>
                    <HeadCell aria-label="Selected"><CheckIcon /></HeadCell>
                    <HeadCell>Description</HeadCell>
                    <HeadCell>Qty</HeadCell>
                    <HeadCell>Avl.</HeadCell>
                    <HeadCell>Shar.</HeadCell>
                    <HeadCell colSpan={2}>Fee</HeadCell>
                  </tr>
                </thead>
                <tbody>
                  {features.map((f, i) => <FeatureRow key={f.name} feature={f} striped={i % 2 === 1} />)}
                </tbody>
              </Table>
            </Column>
          </Columns>
        </Panel>
      </Page>
    </>
  );
}
